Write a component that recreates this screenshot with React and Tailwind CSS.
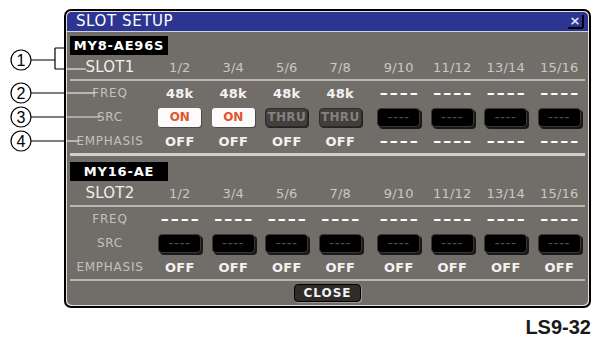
import React from "react";

const COLS = ["1/2", "3/4", "5/6", "7/8", "9/10", "11/12", "13/14", "15/16"];
const GRID = "grid grid-cols-[86px_repeat(4,53.5px)_5px_repeat(4,53.5px)] items-center h-[24px]";

function Row({ label, cells }) {
  return (
    <div className={GRID}>
      <div className="flex justify-center">{label}</div>
      {cells.slice(0, 4).map((c, i) => (
        <div key={i} className="flex justify-center">{c}</div>
      ))}
      <div />
      {cells.slice(4).map((c, i) => (
        <div key={i + 4} className="flex justify-center">{c}</div>
      ))}
    </div>
  );
}

const Dash = () => (
  <span className="text-[16px] font-bold text-white tracking-[2px] leading-none pl-[2px]">––––</span>
);
const Val = ({ t }) => <span className="text-[13px] font-bold text-[#f4f2f0] leading-none tracking-[0.3px]">{t}</span>;
const Head = ({ t }) => <span className="text-[13px] text-[#cbc7c3] leading-none tracking-[0.25px]">{t}</span>;

const OnBtn = () => (
  <div className="w-[43px] h-[19px] rounded-[3px] bg-[#fbfbfb] flex items-center justify-center shadow-[1px_1px_0_#4f4b48]">
    <span className="text-[12px] font-bold text-[#e6552c] leading-none">ON</span>
  </div>
);
const ThruBtn = () => (
  <div className="w-[43px] h-[19px] rounded-[4px] bg-[#433f3d] border border-[#2e2b29] flex items-center justify-center shadow-[1px_1px_0_#24211f]">
    <span className="text-[12px] font-bold text-[#85817d] leading-none tracking-[0.3px]">THRU</span>
  </div>
);
const BlackBtn = () => (
  <div className="w-[43px] h-[19px] rounded-[4px] bg-black border border-[#3a3735] flex items-center justify-center shadow-[2px_2px_0_#1b1918]">
    <span className="text-[9px] font-bold text-[#55514e] leading-none tracking-[1px]">––––</span>
  </div>
);

const Label = ({ t }) => <span className="text-[12px] text-[#c4c0bc] tracking-[0.75px] leading-none">{t}</span>;

function Section({ model, slot, freq, src, emph }) {
  return (
    <div>
      <div className="ml-[3px] w-[98px] h-[19px] bg-black flex items-center justify-center">
        <span className="text-[13px] font-bold text-white tracking-[0.8px] leading-none">{model}</span>
      </div>
      <Row
        label={<span className="text-[15px] text-[#f2eeea] leading-none tracking-[0.2px]">{slot}</span>}
        cells={COLS.map((c) => <Head t={c} />)}
      />
      <div className="mx-[3px] h-[2px] bg-[#bab6b2]" />
      <Row label={<Label t="FREQ" />} cells={freq} />
      <Row label={<Label t="SRC" />} cells={src} />
      <Row label={<Label t="EMPHASIS" />} cells={emph} />
    </div>
  );
}

export default function App() {
  const f1 = [<Val t="48k" />, <Val t="48k" />, <Val t="48k" />, <Val t="48k" />, <Dash />, <Dash />, <Dash />, <Dash />];
  const s1 = [<OnBtn />, <OnBtn />, <ThruBtn />, <ThruBtn />, <BlackBtn />, <BlackBtn />, <BlackBtn />, <BlackBtn />];
  const e1 = [<Val t="OFF" />, <Val t="OFF" />, <Val t="OFF" />, <Val t="OFF" />, <Dash />, <Dash />, <Dash />, <Dash />];
  const f2 = COLS.map(() => <Dash />);
  const s2 = COLS.map(() => <BlackBtn />);
  const e2 = COLS.map(() => <Val t="OFF" />);

  return (
    <div className="relative w-[598px] h-[343px] bg-white overflow-hidden font-['DejaVu_Sans',sans-serif]">
      <div className="pt-[9px] pl-[64px]">
        <div className="w-[527px] rounded-[7px] border-2 border-black bg-[#e4e0dc] p-[1px]">
          <div className="rounded-[5px] overflow-hidden bg-[#716d69]">
            <div className="h-[20px] bg-[#2d3592] border-b border-[#cfd0e0] flex items-center justify-between pl-[9px] pr-[4px]">
              <span className="text-[15px] text-white tracking-[0.6px] leading-none">SLOT SETUP</span>
              <div className="w-[16px] h-[14px] flex items-center justify-center border-r-2 border-b-2 border-black rounded-br-[3px]">
                <span className="text-[13px] font-bold text-[#dfe4ff] leading-none">×</span>
              </div>
            </div>
            <div className="pt-[4px]">
              <Section model="MY8-AE96S" slot="SLOT1" freq={f1} src={s1} emph={e1} />
              <div className="mx-[3px] h-[3px] bg-[#d2cec9] mb-[6px]" />
              <Section model="MY16-AE" slot="SLOT2" freq={f2} src={s2} emph={e2} />
              <div className="mx-[3px] h-[2px] bg-[#b8b4b0]" />
              <div className="flex justify-center pt-[3px] pb-[3px]">
                <div className="w-[67px] h-[18px] rounded-[4px] bg-[#2f2c2a] border border-black flex items-center justify-center shadow-[1px_1px_0_#9a9692]">
                  <span className="text-[12px] font-bold text-[#f2f2f2] tracking-[1px] leading-none">CLOSE</span>
                </div>
              </div>
            </div>
          </div>
        </div>
      </div>
      <div className="w-[591px] text-right mt-[8px] text-[20px] font-bold text-[#1a1a1a] leading-[23px] font-['Liberation_Sans',Arial,sans-serif]">
        LS9-32
      </div>

      <svg className="absolute left-0 top-0 pointer-events-none" width="598" height="343" viewBox="0 0 598 343">
        <g fill="none" strokeWidth="1.2">
          <path d="M31 60 H55 M55 48 V69 M55 48 H64 M55 69 H64" stroke="#000" />
          <path d="M67 69 H86" stroke="#e8e6e4" />
          <path d="M31 93 H64" stroke="#000" />
          <path d="M67 93 H95" stroke="#e8e6e4" />
          <path d="M31 117 H64" stroke="#000" />
          <path d="M67 117 H100" stroke="#e8e6e4" />
          <path d="M31 141 H64" stroke="#000" />
          <path d="M67 141 H78" stroke="#e8e6e4" />
          {[60, 93, 117, 141].map((y) => (
            <circle key={y} cx="21" cy={y} r="10" stroke="#000" fill="#fff" />
          ))}
        </g>
        {[["1", 60], ["2", 93], ["3", 117], ["4", 141]].map(([n, y]) => (
          <text key={n} x="21" y={y + 5.5} textAnchor="middle" fontSize="16" fontFamily="Liberation Sans, Arial, sans-serif" fill="#000">
            {n}
          </text>
        ))}
      </svg>
    </div>
  );
}
